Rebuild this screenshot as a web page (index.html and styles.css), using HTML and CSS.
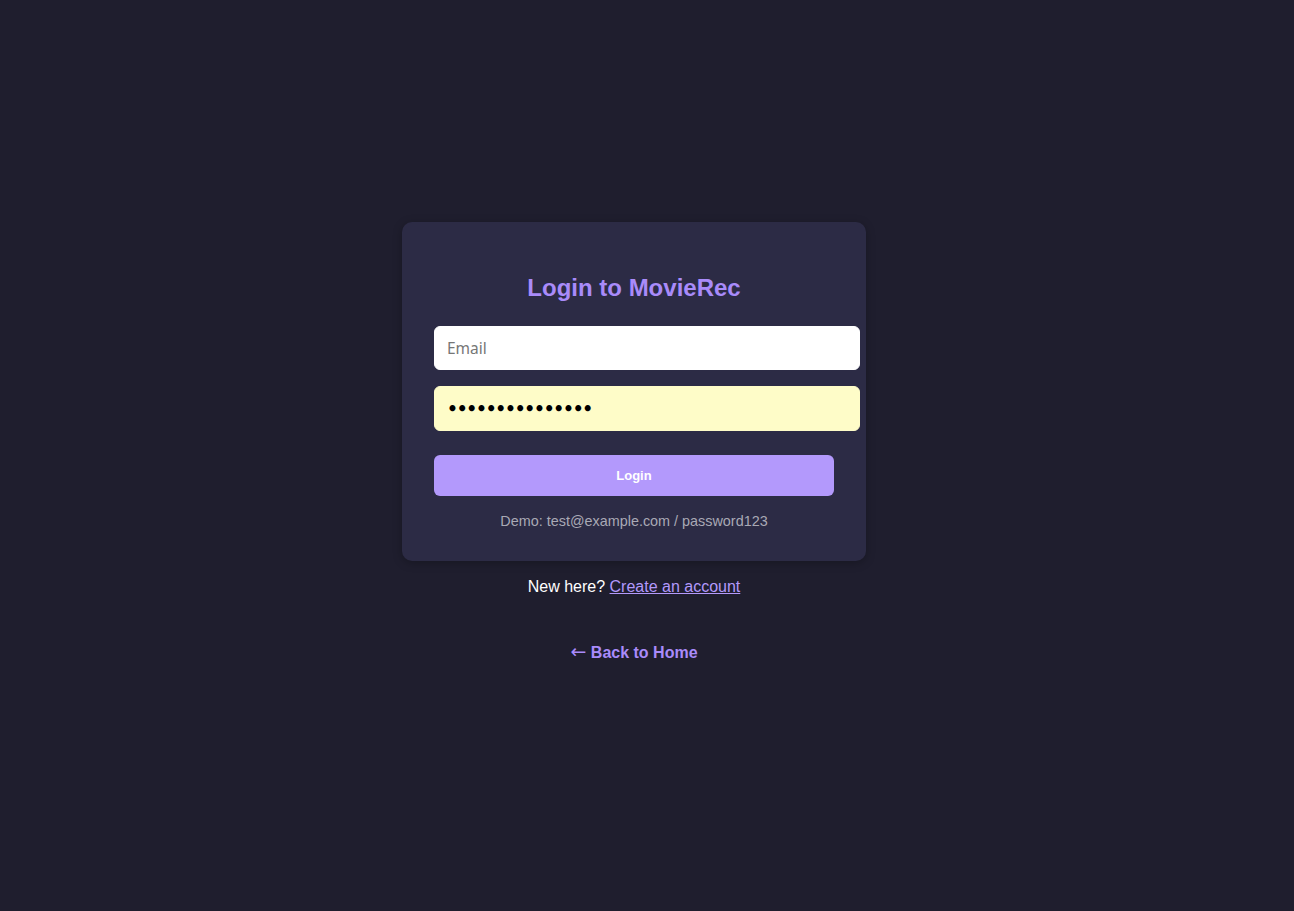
FILE: index.html
```html
<!DOCTYPE html>
<html lang="en">
<head>
<meta charset="utf-8">
<title>Login - MovieRec</title>
<link rel="stylesheet" href="styles.css">
</head>
<body>
<main class="page">
  <section class="card">
    <h2 class="title">Login to MovieRec</h2>
    <form class="form">
      <input class="field" type="email" placeholder="Email">
      <input class="field field-filled" type="password" value="passwordpasswor">
      <button class="btn" type="button">Login</button>
    </form>
    <p class="demo">Demo: test@example.com / password123</p>
  </section>
  <p class="signup">New here? <a href="#" class="link">Create an account</a></p>
  <a href="#" class="back"><span class="arrow">←</span> Back to Home</a>
</main>
</body>
</html>
```

FILE: styles.css
```css
* { box-sizing: content-box; }
html, body {
  margin: 0;
  padding: 0;
  background: #1f1e2e;
}
body {
  font-family: "Liberation Sans", Arial, sans-serif;
  color: #ffffff;
}
.page {
  display: flex;
  flex-direction: column;
  align-items: center;
  padding-top: 222px;
  padding-right: 26px;
  min-height: 689px;
}
.card {
  width: 400px;
  padding: 32px;
  background: #2c2b45;
  border-radius: 10px;
  box-shadow: 0 2px 10px rgba(0, 0, 0, 0.25);
}
.title {
  margin: 20px 0 24px;
  font-size: 24px;
  line-height: 28px;
  font-weight: bold;
  text-align: center;
  color: #a98bfa;
}
.form {
  margin: 0;
}
.field {
  display: block;
  width: 100%;
  height: 18px;
  padding: 12px;
  margin: 0 0 16px;
  font-family: "Noto Sans", "Open Sans", sans-serif;
  font-size: 15.5px;
  color: #000;
  background: #ffffff;
  border: 1px solid #ffffff;
  border-radius: 6px;
  outline: none;
}
.field::placeholder {
  color: #767676;
}
.field-filled {
  background: #fefcc8;
  border-color: #fefcc8;
  height: 19px;
  font-family: "DejaVu Sans", sans-serif;
  font-weight: bold;
  font-size: 17px;
  letter-spacing: -1.2px;
}
.btn {
  display: block;
  width: 400px;
  height: 41px;
  margin-top: 24px;
  padding: 0;
  border: 0;
  border-radius: 6px;
  background: #b399fc;
  color: #ffffff;
  font-family: "Liberation Sans", Arial, sans-serif;
  font-size: 13px;
  font-weight: bold;
  cursor: pointer;
}
.demo {
  margin: 17px 0 0;
  font-size: 14.4px;
  line-height: 16px;
  text-align: center;
  color: #a9a9b5;
}
.signup {
  margin: 17px 0 0;
  font-size: 16px;
  line-height: 18px;
  color: #ffffff;
}
.link {
  color: #b399fc;
  text-decoration: underline;
}
.back {
  margin-top: 46px;
  font-size: 16px;
  line-height: 18px;
  font-weight: bold;
  color: #a98bfa;
  text-decoration: none;
}
.arrow {
  font-family: "DejaVu Sans", sans-serif;
  font-weight: normal;
  font-size: 19px;
  line-height: 18px;
}
```
